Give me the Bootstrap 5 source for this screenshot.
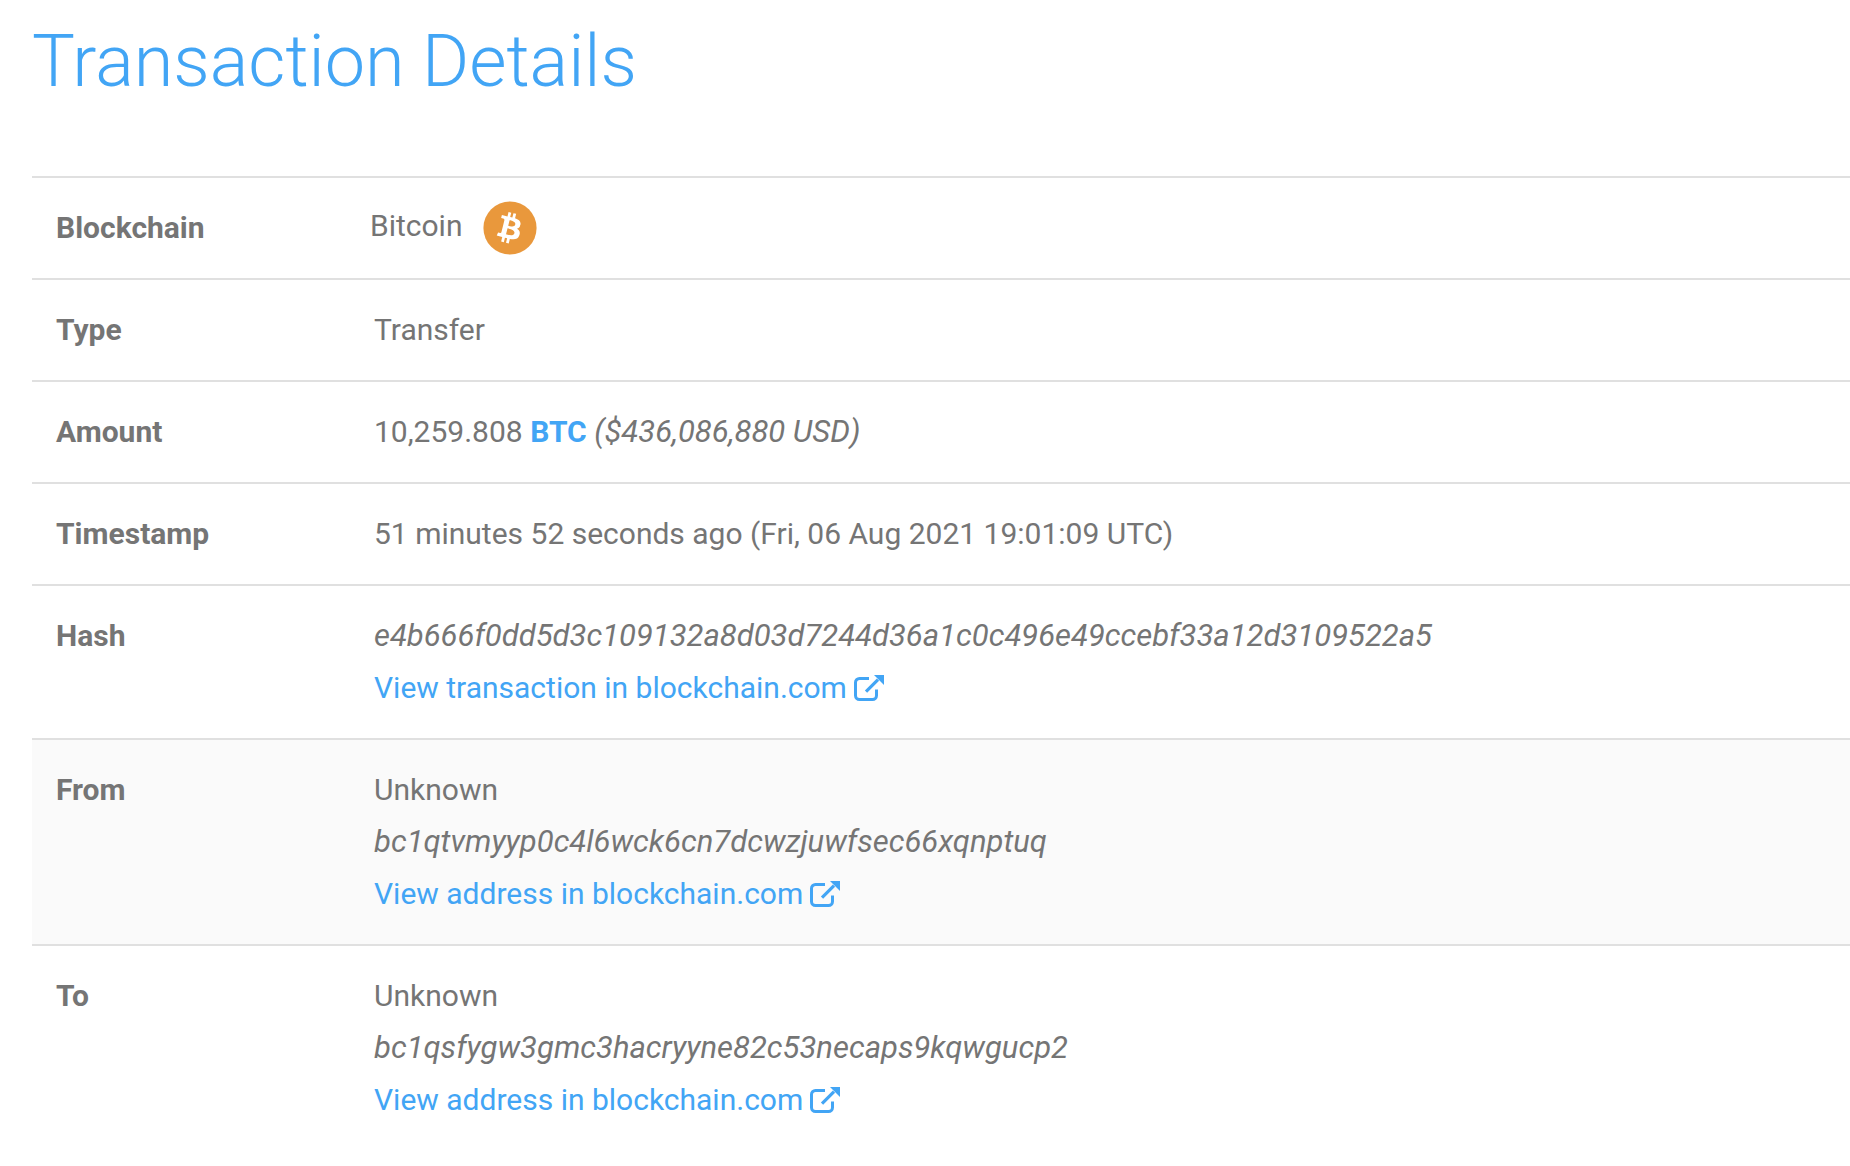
<!DOCTYPE html>
<html lang="en">
<head>
<meta charset="utf-8">
<title>Transaction Details</title>
<link href="https://cdn.jsdelivr.net/npm/bootstrap@5.3.0/dist/css/bootstrap.min.css" rel="stylesheet">
<style>
html,body{height:1166px;overflow:hidden;background:#fff}
body{font-family:Roboto,"Liberation Sans",sans-serif;color:#757575}
.page-wrap{padding-left:32px}
.page-title{font-family:Roboto,sans-serif;font-weight:300;font-size:72px;line-height:84px;color:#42a5f5;margin:20px 0 72px;letter-spacing:-.03px}
.tx-table{margin:0;width:100%;border-collapse:collapse;table-layout:fixed;border-top:2px solid #e0e0e0;--bs-table-color:#757575;--bs-table-bg:transparent}
.tx-table th,.tx-table td{font-size:30px;line-height:52px;padding:24px;border:0;border-bottom:2px solid #e0e0e0;vertical-align:top;color:#757575;background:transparent;box-shadow:none}
.tx-table tr:last-child th,.tx-table tr:last-child td{border-bottom:0}
.tx-table th{width:342px;font-weight:700}
.tx-table td{padding-left:0}
.tx-table tr.shade th,.tx-table tr.shade td{background:#fafafa}
.tx-link{color:#42a5f5;text-decoration:none}
.tx-coin{color:#42a5f5;font-weight:700}
.ext-icon{width:30px;height:26px;margin-left:7px;vertical-align:-3px}
.chain-cell{display:flex;align-items:center;gap:21px;margin-left:-4px;height:52px}
.chain-name{position:relative;top:-2px}
.btc-logo{width:54px;height:54px;flex:none}
.mono-hash,.tx-table em{font-style:italic;font-size:31px}
</style>
</head>
<body>
<div class="page-wrap">
<h1 class="page-title">Transaction Details</h1>
<table class="table tx-table">
<tbody>
<tr><th scope="row">Blockchain</th><td><div class="chain-cell"><span class="chain-name">Bitcoin</span>
<svg class="btc-logo" viewBox="0 0 64 64" aria-hidden="true"><circle cx="32" cy="32" r="31.500" fill="#e9983c"/><path fill="#fff" d="M44.500 27.900c.6-3.900-2.400-6-6.500-7.400l1.300-5.300-3.200-.8-1.300 5.200-2.600-.6 1.300-5.200-3.200-.8-1.300 5.300-2.100-.5-4.500-1.100-.9 3.400 2.400.6c1.300.3 1.500 1.200 1.500 1.900l-1.500 6-2.100 8.400c-.2.400-.6 1-1.500.8l-2.400-.6-1.600 3.700 4.200 1.100 2.300.6-1.300 5.400 3.200.8 1.300-5.300 2.600.7-1.300 5.300 3.200.8 1.300-5.400c5.500 1 9.600.6 11.300-4.300 1.400-4-.1-6.300-2.900-7.800 2.100-.5 3.600-1.800 4-4.800zm-7.300 10.300c-1 4-7.700 1.800-9.900 1.300l1.800-7.100c2.200.5 9.100 1.700 8.100 5.800zm1-10.300c-.9 3.700-6.500 1.800-8.300 1.300l1.600-6.400c1.800.5 7.700 1.300 6.700 5.100z"/></svg>
</div></td></tr>
<tr><th scope="row">Type</th><td>Transfer</td></tr>
<tr><th scope="row">Amount</th><td>10,259.808 <span class="tx-coin">BTC</span> <em>($436,086,880 USD)</em></td></tr>
<tr><th scope="row">Timestamp</th><td>51 minutes 52 seconds ago (Fri, 06 Aug 2021 19:01:09 UTC)</td></tr>
<tr><th scope="row">Hash</th><td><div class="mono-hash">e4b666f0dd5d3c109132a8d03d7244d36a1c0c496e49ccebf33a12d3109522a5</div>
<a class="tx-link" href="#">View transaction in blockchain.com<svg class="ext-icon" viewBox="0 0 30 26" aria-hidden="true"><path fill="none" stroke="#42a5f5" stroke-width="3" d="M15 3.500H5.500a4 4 0 0 0-4 4V20.500a4 4 0 0 0 4 4H18.500a4 4 0 0 0 4-4v-6"/><path fill="none" stroke="#42a5f5" stroke-width="3.200" d="M12 16.700 24 4.700"/><path fill="#42a5f5" d="M20 0h10v10z"/></svg></a></td></tr>
<tr class="shade"><th scope="row">From</th><td><div>Unknown</div><div class="mono-hash">bc1qtvmyyp0c4l6wck6cn7dcwzjuwfsec66xqnptuq</div>
<a class="tx-link" href="#">View address in blockchain.com<svg class="ext-icon" viewBox="0 0 30 26" aria-hidden="true"><path fill="none" stroke="#42a5f5" stroke-width="3" d="M15 3.500H5.500a4 4 0 0 0-4 4V20.500a4 4 0 0 0 4 4H18.500a4 4 0 0 0 4-4v-6"/><path fill="none" stroke="#42a5f5" stroke-width="3.200" d="M12 16.700 24 4.700"/><path fill="#42a5f5" d="M20 0h10v10z"/></svg></a></td></tr>
<tr><th scope="row">To</th><td><div>Unknown</div><div class="mono-hash">bc1qsfygw3gmc3hacryyne82c53necaps9kqwgucp2</div>
<a class="tx-link" href="#">View address in blockchain.com<svg class="ext-icon" viewBox="0 0 30 26" aria-hidden="true"><path fill="none" stroke="#42a5f5" stroke-width="3" d="M15 3.500H5.500a4 4 0 0 0-4 4V20.500a4 4 0 0 0 4 4H18.500a4 4 0 0 0 4-4v-6"/><path fill="none" stroke="#42a5f5" stroke-width="3.200" d="M12 16.700 24 4.700"/><path fill="#42a5f5" d="M20 0h10v10z"/></svg></a></td></tr>
</tbody>
</table>
</div>
<script src="https://cdn.jsdelivr.net/npm/bootstrap@5.3.0/dist/js/bootstrap.bundle.min.js"></script>
</body>
</html>
